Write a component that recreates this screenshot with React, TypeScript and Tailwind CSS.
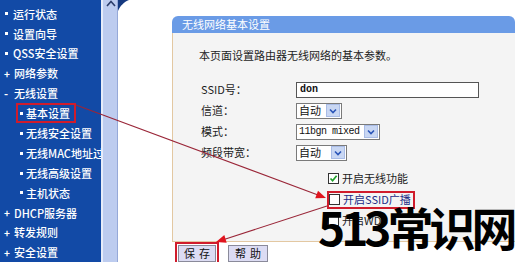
import React from 'react';

const CJK = "font-['Noto_Sans_CJK_SC','Noto_Sans',sans-serif]";
const MONO = "font-['Liberation_Mono','DejaVu_Sans_Mono',monospace]";

type NavItem = { label: string; mark: '•' | '+' | '-'; sub?: boolean; active?: boolean };

const NAV: NavItem[] = [
  { label: '运行状态', mark: '•' },
  { label: '设置向导', mark: '•' },
  { label: 'QSS安全设置', mark: '•' },
  { label: '网络参数', mark: '+' },
  { label: '无线设置', mark: '-' },
  { label: '基本设置', mark: '•', sub: true, active: true },
  { label: '无线安全设置', mark: '•', sub: true },
  { label: '无线MAC地址过滤', mark: '•', sub: true },
  { label: '无线高级设置', mark: '•', sub: true },
  { label: '主机状态', mark: '•', sub: true },
  { label: 'DHCP服务器', mark: '+' },
  { label: '转发规则', mark: '+' },
  { label: '安全设置', mark: '+' },
];

function Mark({ m }: { m: NavItem['mark'] }) {
  if (m === '+') return <span className="w-[6px] text-[10px] font-bold leading-none">+</span>;
  if (m === '-') return <span className="w-[6px] text-[11px] font-bold leading-none">-</span>;
  return <span className="mx-[1px] h-[3px] w-[3px] bg-white" />;
}

function Sidebar() {
  return (
    <div className={`w-[101px] shrink-0 overflow-hidden bg-[#124aa6] pt-[4px] text-[11px] font-medium text-white ${CJK}`}>
      {NAV.map((it) => (
        <div key={it.label} className="flex h-[19.9px] items-center">
          {it.sub ? (
            <div
              className={`ml-[16px] flex h-[20px] items-center gap-[2px] whitespace-nowrap pl-[1px] pr-[4px] ${
                it.active ? 'border-2 border-[#d01c2c]' : 'border-2 border-transparent'
              }`}
            >
              <Mark m={it.mark} />
              <span>{it.label}</span>
            </div>
          ) : (
            <div className="ml-[4px] flex items-center gap-[4px] whitespace-nowrap">
              <Mark m={it.mark} />
              <span>{it.label}</span>
            </div>
          )}
        </div>
      ))}
    </div>
  );
}

function Scrollbar() {
  return (
    <div className="w-[17px] shrink-0 border-l-2 border-r border-l-[#e6ecfa] border-r-[#96a9d8] bg-[#bdccef]">
      <svg width="14" height="8" viewBox="0 0 14 8" className="ml-[1px]">
        <path d="M3 6 L7 1.5 L11 6" fill="none" stroke="#2b3c6a" strokeWidth="1.6" />
      </svg>
    </div>
  );
}

function SelectBox({ value, width }: { value: string; width: string }) {
  const ascii = /^[\x00-\x7f]+$/.test(value);
  return (
    <div className={`flex h-[16px] items-center justify-between border border-[#7a7a7a] bg-white pl-[2px] pr-[1px] ${width}`}>
      <span className={ascii ? `${MONO} text-[10px] tracking-[-0.5px] text-[#111]` : 'text-[11px] text-[#111]'}>{value}</span>
      <span className="flex h-[13px] w-[14px] items-center justify-center border border-[#a9bce6] bg-[#c9d7f3]">
        <svg width="8" height="6" viewBox="0 0 8 6">
          <path d="M1 1.5 L4 4.5 L7 1.5" fill="none" stroke="#2a55b8" strokeWidth="1.6" />
        </svg>
      </span>
    </div>
  );
}

function CheckBox({ checked }: { checked?: boolean }) {
  return (
    <span className="flex h-[11px] w-[11px] shrink-0 items-center justify-center border border-[#333] bg-white">
      {checked && (
        <svg width="9" height="9" viewBox="0 0 9 9">
          <path d="M1.5 4.5 L3.6 6.8 L7.6 1.8" fill="none" stroke="#21a12b" strokeWidth="1.7" />
        </svg>
      )}
    </span>
  );
}

function FormRow({ label, children }: { label: string; children: React.ReactNode }) {
  return (
    <div className="flex h-[21px] items-center">
      <span className="w-[123px] shrink-0 pl-[28px] text-[11px] text-[#1c1c1c]">{label}</span>
      {children}
    </div>
  );
}

function Panel() {
  return (
    <div className="ml-[54px] mt-[16px] w-[343px]">
      <div className="flex h-[17px] items-center rounded-t-[6px] bg-[#6a9be6] pl-[10px] text-[11px] text-white">
        无线网络基本设置
      </div>
      <div className="h-[209px] border-b border-l border-[#e3c8a2] bg-[#f4f4f4]">
        <p className="pl-[26px] pt-[15px] text-[11px] leading-[14px] text-[#1c1c1c]">
          本页面设置路由器无线网络的基本参数。
        </p>
        <div className="mt-[17px]">
          <FormRow label="SSID号：">
            <div className={`flex h-[16px] w-[183px] items-center border border-[#555] bg-white pl-[3px] ${MONO} text-[10px] font-bold text-[#111]`}>
              don
            </div>
          </FormRow>
          <FormRow label="信道：">
            <SelectBox value="自动" width="w-[46px]" />
          </FormRow>
          <FormRow label="模式：">
            <SelectBox value="11bgn mixed" width="w-[84px]" />
          </FormRow>
          <FormRow label="频段带宽：">
            <SelectBox value="自动" width="w-[51px]" />
          </FormRow>
        </div>
        <div className="mt-[5px] pl-[154px] text-[11px] text-[#1c1c1c]">
          <div className="flex h-[21px] items-center gap-[3px] pl-[1px]">
            <CheckBox checked />
            <span>开启无线功能</span>
          </div>
          <div className="flex h-[21px] items-center">
            <div className="flex h-[18px] items-center gap-[3px] border-2 border-[#d01c2c] pr-[2px]">
              <CheckBox />
              <span className="text-[#1d2c86]">开启SSID广播</span>
            </div>
          </div>
          <div className="flex h-[21px] items-center gap-[3px] pl-[1px]">
            <CheckBox />
            <span>开启WDS</span>
          </div>
        </div>
      </div>
      <div className="flex items-start gap-[9px] pl-[3px]">
        <div className="border-2 border-[#d01c2c] p-[1px]">
          <button className="flex h-[17px] w-[38px] items-center justify-center border border-[#8a8a9a] bg-[#dcdcf3] pl-[4px] text-[11px] leading-none tracking-[4px] text-[#111]">
            保存
          </button>
        </div>
        <button className="mt-[3px] flex h-[17px] w-[40px] items-center justify-center border border-[#8a8a9a] bg-[#dcdcf3] pl-[4px] text-[11px] leading-none tracking-[4px] text-[#111]">
          帮助
        </button>
      </div>
    </div>
  );
}

export default function App() {
  return (
    <div className={`relative flex h-[262px] w-[520px] overflow-hidden bg-white ${CJK}`}>
      <Sidebar />
      <Scrollbar />
      <div className="relative flex-1">
        <svg width="12" height="12" viewBox="0 0 12 12" className="absolute left-0 top-0">
          <path d="M0 0 L11 0 C6 2 2 6 0 11 Z" fill="#163a80" />
        </svg>
        <Panel />
      </div>

      {/* annotation arrows */}
      <svg width="520" height="262" viewBox="0 0 520 262" className="pointer-events-none absolute inset-0">
        <line x1="76" y1="105" x2="318" y2="195" stroke="#9a2638" strokeWidth="1.1" />
        <polygon points="326,198 318,190.8 315.2,198.2" fill="#e0141e" />
        <line x1="327" y1="206" x2="224" y2="239.5" stroke="#9a2638" strokeWidth="1.1" />
        <polygon points="216,242 226.7,242.7 224.3,235.1" fill="#e0141e" />
      </svg>

      {/* watermark */}
      <div className="pointer-events-none absolute left-[318px] top-[203px] whitespace-nowrap text-[46px] font-bold leading-[46px] tracking-[-4px] text-black">
        513常识网
      </div>
    </div>
  );
}
